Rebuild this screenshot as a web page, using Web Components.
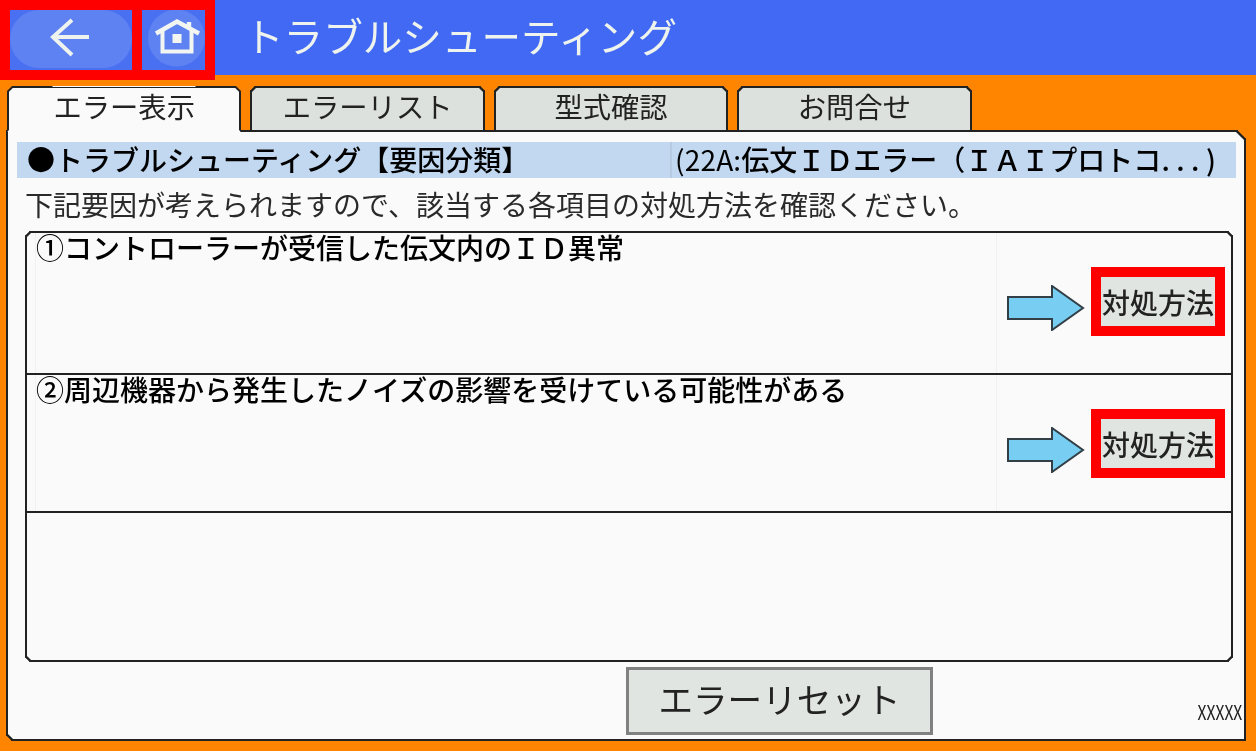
<!DOCTYPE html>
<html lang="ja">
<head>
<meta charset="UTF-8" />
<title>トラブルシューティング</title>
<style>
  html, body { margin: 0; height: 100%; }
  body {
    width: 1256px; height: 751px; overflow: hidden;
    background: #ff8400; color: #222;
    font-family: "Noto Sans CJK JP", "Noto Sans", sans-serif;
    display: flex; flex-direction: column;
  }
</style>
</head>
<body>
  <app-header>トラブルシューティング</app-header>
  <tab-bar>
    <tab-item active>エラー表示</tab-item>
    <tab-item>エラーリスト</tab-item>
    <tab-item>型式確認</tab-item>
    <tab-item>お問合せ</tab-item>
  </tab-bar>
  <main-panel>
    <heading-bar>
      ●トラブルシューティング【要因分類】
      <span slot="detail"><span style="font-weight:400;letter-spacing:.2px">(22A:</span>伝文ＩＤエラー（ＩＡＩプロトコ<span style="letter-spacing:6.5px">...</span>)</span>
    </heading-bar>
    <p-note>下記要因が考えられますので、該当する各項目の対処方法を確認ください。</p-note>
    <cause-table>
      <cause-row style="height:142px">①コントローラーが受信した伝文内のＩＤ異常</cause-row>
      <cause-row style="height:138px">②周辺機器から発生したノイズの影響を受けている可能性がある</cause-row>
    </cause-table>
    <panel-footer>
      <reset-button>エラーリセット</reset-button>
      <span slot="code">XXXXX</span>
    </panel-footer>
  </main-panel>

  <script>
    // 共用：sheet + markup でシャドウを作る
    function shadow(el, html) {
      el.attachShadow({ mode: 'open' }).innerHTML = html;
    }

    class AppHeader extends HTMLElement {
      connectedCallback() {
        shadow(this, `
          <style>
            :host { display: flex; height: 75px; flex: none; background: #4169f3; position: relative; z-index: 2; }
            .marks { display: flex; gap: 10px; height: 60px; padding: 10px; background: #f00; }
            .btn { display: block; background: #4a70f2; }
            .title { margin-left: 29px; font-size: 39.6px; line-height: 70px; color: #eef3ee; white-space: nowrap; filter: blur(.35px); }
          </style>
          <div class="marks">
            <svg class="btn" width="122" height="60" viewBox="0 0 122 60">
              <rect x="0" y="0" width="122" height="58" rx="29" fill="#5f82f3"/>
              <path d="M79 27H44M62 10L43 27L62 45" fill="none" stroke="#eef3ee" stroke-width="4"/>
            </svg>
            <svg class="btn" width="63" height="60" viewBox="0 0 63 60">
              <circle cx="34.5" cy="28" r="28.5" fill="#5f82f3"/>
              <path d="M14 23.5L35 11.5L57 23.5M47 12V18" fill="none" stroke="#f2f5f0" stroke-width="4.4"/>
              <path d="M20.5 21V41.5H49.5V21" fill="none" stroke="#f2f5f0" stroke-width="4"/>
              <rect x="30.5" y="24" width="9" height="9" fill="#f2f5f0"/>
            </svg>
          </div>
          <div class="title"><slot></slot></div>
        `);
      }
    }

    class TabBar extends HTMLElement {
      connectedCallback() {
        shadow(this, `
          <style>
            :host { display: flex; gap: 9px; padding: 11px 0 0 7px; flex: none; margin-bottom: -2px; position: relative; z-index: 1; }
          </style>
          <slot></slot>
        `);
      }
    }

    class TabItem extends HTMLElement {
      connectedCallback() {
        shadow(this, `
          <style>
            :host {
              display: block; box-sizing: border-box; width: 234.4px; height: 46px;
              background: #dde1de; color: #222;
              border: 2px solid #222; border-bottom: 2px solid #222;
              border-radius: 5px 5px 0 0; corner-shape: bevel;
              font-size: 28.3px; line-height: 36px; text-align: center;
            }
            :host([active]) { background: #fafafa; border-bottom-color: #fafafa; }
            span { filter: blur(.35px); display: block; }
          </style>
          <span><slot></slot></span>
        `);
      }
    }

    class MainPanel extends HTMLElement {
      connectedCallback() {
        shadow(this, `
          <style>
            :host {
              display: flex; flex-direction: column; box-sizing: border-box;
              width: 1240px; height: 611px; margin-left: 6px; padding: 10px 9px 0 9px;
              background: #fafafa; border: 2px solid #222;
              border-radius: 0 9px 0 6px; corner-shape: bevel;
            }
          </style>
          <slot></slot>
        `);
      }
    }

    class HeadingBar extends HTMLElement {
      connectedCallback() {
        shadow(this, `
          <style>
            :host {
              display: flex; height: 36px; flex: none; width: 1219px;
              background: #c1d8f0; color: #000;
              font-size: 28px; line-height: 34px; white-space: nowrap; font-weight: 500;
            }
            .main { width: 653px; padding-left: 10px; box-sizing: border-box; filter: blur(.3px); }
            .detail { border-left: 2px solid #b6cbe0; padding-left: 3px; filter: blur(.3px); }
          </style>
          <div class="main"><slot></slot></div>
          <div class="detail"><slot name="detail"></slot></div>
        `);
      }
    }

    class PNote extends HTMLElement {
      connectedCallback() {
        shadow(this, `
          <style>
            :host { display: block; flex: none; height: 53px; padding-left: 8px; font-size: 28px; line-height: 52px; color: #2a2a2a; white-space: nowrap; filter: blur(.35px); }
          </style>
          <slot></slot>
        `);
      }
    }

    class CauseTable extends HTMLElement {
      connectedCallback() {
        shadow(this, `
          <style>
            :host {
              display: flex; flex-direction: column; box-sizing: border-box; flex: none;
              width: 1208px; height: 431px; margin-left: 8px;
              border: 2px solid #222;
              border-radius: 5px; corner-shape: bevel;
            }
          </style>
          <slot></slot>
        `);
      }
    }

    class CauseRow extends HTMLElement {
      connectedCallback() {
        shadow(this, `
          <style>
            :host {
              display: flex; box-sizing: border-box; flex: none; padding-left: 8px;
              border-bottom: 2px solid #222;
            }
            .text {
              flex: none; width: 962px; box-sizing: border-box;
              border-left: 1px solid #f1f1f1; border-right: 1px solid #f1f1f1;
              font-size: 28px; line-height: 28px; color: #000; font-weight: 500; white-space: nowrap;
            }
            .text span { display: block; filter: blur(.3px); }
            .action { display: flex; align-items: flex-start; padding: 34px 0 0 10px; }
            svg { margin: 18px 6px 0 0; flex: none; }
          </style>
          <div class="text"><span><slot></slot></span></div>
          <div class="action">
            <svg width="78" height="46" viewBox="0 0 78 46">
              <path d="M1 12H45V1L76 23L45 45V34H1Z" fill="#77cdf2" stroke="#333f46" stroke-width="2"/>
            </svg>
            <action-button>対処方法</action-button>
          </div>
        `);
      }
    }

    class ActionButton extends HTMLElement {
      connectedCallback() {
        shadow(this, `
          <style>
            :host {
              display: block; flex: none; width: 114px; height: 49px;
              border: 10px solid #f00; background: #e1e5e2; color: #222;
              font-size: 28px; line-height: 50px; text-align: center; white-space: nowrap; font-weight: 500;
            }
            span { display: block; filter: blur(.3px); }
          </style>
          <span><slot></slot></span>
        `);
      }
    }

    class PanelFooter extends HTMLElement {
      connectedCallback() {
        shadow(this, `
          <style>
            :host { display: flex; flex: 1; align-items: flex-start; padding: 5px 0 0 609px; }
            .code { margin: 31px -7px 0 auto; font-size: 20px; line-height: 28px; transform: scaleX(.78); transform-origin: right; color: #222; }
          </style>
          <slot></slot>
          <div class="code"><slot name="code"></slot></div>
        `);
      }
    }

    class ResetButton extends HTMLElement {
      connectedCallback() {
        shadow(this, `
          <style>
            :host {
              display: block; box-sizing: border-box; width: 307px; height: 68px;
              border: 3px solid #808080; background: #e1e5e2; color: #222;
              font-size: 34.6px; line-height: 56px; text-align: center; white-space: nowrap;
            }
            span { display: block; filter: blur(.35px); }
          </style>
          <span><slot></slot></span>
        `);
      }
    }

    customElements.define('app-header', AppHeader);
    customElements.define('tab-bar', TabBar);
    customElements.define('tab-item', TabItem);
    customElements.define('main-panel', MainPanel);
    customElements.define('heading-bar', HeadingBar);
    customElements.define('p-note', PNote);
    customElements.define('cause-table', CauseTable);
    customElements.define('cause-row', CauseRow);
    customElements.define('action-button', ActionButton);
    customElements.define('panel-footer', PanelFooter);
    customElements.define('reset-button', ResetButton);
  </script>
</body>
</html>
